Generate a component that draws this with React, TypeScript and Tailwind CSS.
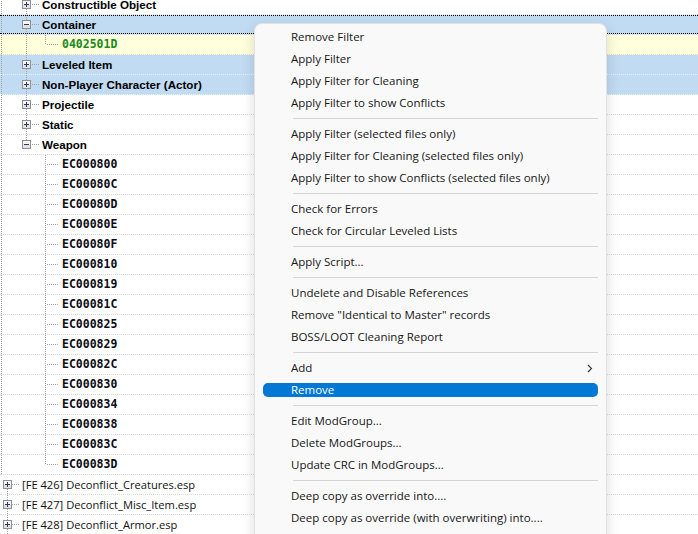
import React from "react";

type Row = {
  level: 0 | 1 | 2;
  label: string;
  expanded?: boolean;
  last?: boolean;
  parentLast?: boolean;
  first?: boolean;
  outer?: boolean;
  sel?: boolean;
  focus?: boolean;
  yellow?: boolean;
  green?: boolean;
};

const ecs = [
  "EC000800",
  "EC00080C",
  "EC00080D",
  "EC00080E",
  "EC00080F",
  "EC000810",
  "EC000819",
  "EC00081C",
  "EC000825",
  "EC000829",
  "EC00082C",
  "EC000830",
  "EC000834",
  "EC000838",
  "EC00083C",
  "EC00083D",
];

const rows: Row[] = [
  { level: 1, label: "Constructible Object", outer: true },
  { level: 1, label: "Container", expanded: true, outer: true, sel: true, focus: true },
  { level: 2, label: "0402501D", outer: true, last: true, parentLast: false, yellow: true, green: true },
  { level: 1, label: "Leveled Item", outer: true, sel: true },
  { level: 1, label: "Non-Player Character (Actor)", outer: true, sel: true },
  { level: 1, label: "Projectile", outer: true },
  { level: 1, label: "Static", outer: true },
  { level: 1, label: "Weapon", expanded: true, outer: true, last: true },
  ...ecs.map((e, i) => ({
    level: 2 as const,
    label: e,
    outer: true,
    parentLast: true,
    last: i === ecs.length - 1,
  })),
  { level: 0, label: "[FE 426] Deconflict_Creatures.esp", first: true },
  { level: 0, label: "[FE 427] Deconflict_Misc_Item.esp" },
  { level: 0, label: "[FE 428] Deconflict_Armor.esp" },
];

const LINE = "#a3a3a3";

function VLine({ x, y1, y2 }: { x: number; y1: number; y2: number }) {
  return <line x1={x} x2={x} y1={y1} y2={y2} stroke={LINE} strokeWidth={1} strokeDasharray="1 1" />;
}
function HLine({ x1, x2, y }: { x1: number; x2: number; y: number }) {
  return <line x1={x1} x2={x2} y1={y} y2={y} stroke={LINE} strokeWidth={1} strokeDasharray="1 1" />;
}

function Box({ x, expanded }: { x: number; expanded?: boolean }) {
  return (
    <g>
      <rect x={x + 0.5} y={5.5} width={8} height={8} fill="#f4f4f4" stroke="#8f9092" strokeWidth={1} />
      <rect x={x + 1} y={10} width={7} height={3} fill="#e2e2e2" />
      <line x1={x + 2} x2={x + 7} y1={9.5} y2={9.5} stroke="#2c3868" strokeWidth={1} />
      {!expanded && <line x1={x + 4.5} x2={x + 4.5} y1={7} y2={12} stroke="#2c3868" strokeWidth={1} />}
    </g>
  );
}

function Gutter({ row }: { row: Row }) {
  const w = row.level === 0 ? 19 : row.level === 1 ? 39 : 59;
  return (
    <svg width={w} height={19} className="shrink-0" viewBox={`0 0 ${w} 19`}>
      {row.outer && <VLine x={1.5} y1={0} y2={19} />}
      {row.level === 0 && (
        <>
          {!row.first && <VLine x={7.5} y1={0} y2={5} />}
          <VLine x={7.5} y1={14} y2={19} />
          <Box x={3} />
          <HLine x1={12} x2={19} y={9.5} />
        </>
      )}
      {row.level === 1 && (
        <>
          <VLine x={26.5} y1={0} y2={5} />
          {!row.last && <VLine x={26.5} y1={14} y2={19} />}
          <Box x={22} expanded={row.expanded} />
          <HLine x1={32} x2={39} y={9.5} />
        </>
      )}
      {row.level === 2 && (
        <>
          {!row.parentLast && <VLine x={26.5} y1={0} y2={19} />}
          <VLine x={45.5} y1={0} y2={row.last ? 10 : 19} />
          <HLine x1={47} x2={58} y={9.5} />
        </>
      )}
    </svg>
  );
}

function TreeRow({ row }: { row: Row }) {
  const bg = row.sel ? "bg-[#c1dbf3]" : row.yellow ? "bg-[#ffffdc]" : "bg-white";
  const sep = row.sel ? "border-[#e9f1fb]" : "border-[#d9d9d9]";
  let textCls = "";
  if (row.level === 1) textCls = "font-['Liberation_Sans',Arial,sans-serif] text-[11.6px] font-bold text-black";
  else if (row.level === 2)
    textCls = row.green
      ? "font-['DejaVu_Sans_Mono',monospace] text-[11.5px] font-bold text-[#1b8a1b]"
      : "font-['DejaVu_Sans_Mono',monospace] text-[11.5px] font-bold text-[#0b0b14]";
  else textCls = "font-['Open_Sans',sans-serif] text-[11.15px] text-[#111]";
  return (
    <div className={`flex h-[20px] flex-col ${bg}`}>
      <div className="relative flex h-[19px] items-center">
        <Gutter row={row} />
        <span className={`ml-[3px] whitespace-nowrap leading-[19px] ${textCls}`}>{row.label}</span>
        {row.focus && (
          <div className="pointer-events-none absolute inset-0 border-y border-dotted border-black" />
        )}
      </div>
      <div className={`h-px border-t border-dotted ${sep}`} />
    </div>
  );
}

type MenuItem = { label?: string; sep?: boolean; active?: boolean; sub?: boolean };

const menu: MenuItem[] = [
  { label: "Remove Filter" },
  { label: "Apply Filter" },
  { label: "Apply Filter for Cleaning" },
  { label: "Apply Filter to show Conflicts" },
  { sep: true },
  { label: "Apply Filter (selected files only)" },
  { label: "Apply Filter for Cleaning (selected files only)" },
  { label: "Apply Filter to show Conflicts (selected files only)" },
  { sep: true },
  { label: "Check for Errors" },
  { label: "Check for Circular Leveled Lists" },
  { sep: true },
  { label: "Apply Script..." },
  { sep: true },
  { label: "Undelete and Disable References" },
  { label: 'Remove "Identical to Master" records' },
  { label: "BOSS/LOOT Cleaning Report" },
  { sep: true },
  { label: "Add", sub: true },
  { label: "Remove", active: true },
  { sep: true },
  { label: "Edit ModGroup..." },
  { label: "Delete ModGroups..." },
  { label: "Update CRC in ModGroups..." },
  { sep: true },
  { label: "Deep copy as override into...." },
  { label: "Deep copy as override (with overwriting) into...." },
];

function Menu() {
  return (
    <div className="absolute left-[254px] top-[23px] h-[540px] w-[353px] rounded-[8px] border border-[#e2e2e2] bg-[#f9f9f9] pt-[2px] font-['Open_Sans',sans-serif] text-[11.5px] text-[#161616] shadow-[0_4px_14px_rgba(0,0,0,0.14)]">
      {menu.map((m, i) =>
        m.sep ? (
          <div key={i} className="flex h-[9px] items-center pl-[38px] pr-[8px]">
            <div className="h-px w-full bg-[#d5d5d5]" />
          </div>
        ) : m.active ? (
          <div key={i} className="flex h-[22px] items-center px-[8px]">
            <div className="flex h-[14px] w-full items-center rounded-[5px] bg-[#0078d4] pl-[28px] leading-[14px] text-white">
              {m.label}
            </div>
          </div>
        ) : (
          <div key={i} className="flex h-[22px] items-center justify-between pl-[36px] pr-[13px] leading-[22px]">
            <span>{m.label}</span>
            {m.sub && (
              <svg width="6" height="9" viewBox="0 0 6 9">
                <path d="M1 1 L4.5 4.5 L1 8" fill="none" stroke="#333" strokeWidth="1.1" />
              </svg>
            )}
          </div>
        )
      )}
    </div>
  );
}

export default function App() {
  return (
    <div className="relative h-[534px] w-[698px] overflow-hidden bg-white">
      <div className="-mt-[5px] flex flex-col">
        {rows.map((r, i) => (
          <TreeRow key={i} row={r} />
        ))}
      </div>
      <Menu />
    </div>
  );
}
